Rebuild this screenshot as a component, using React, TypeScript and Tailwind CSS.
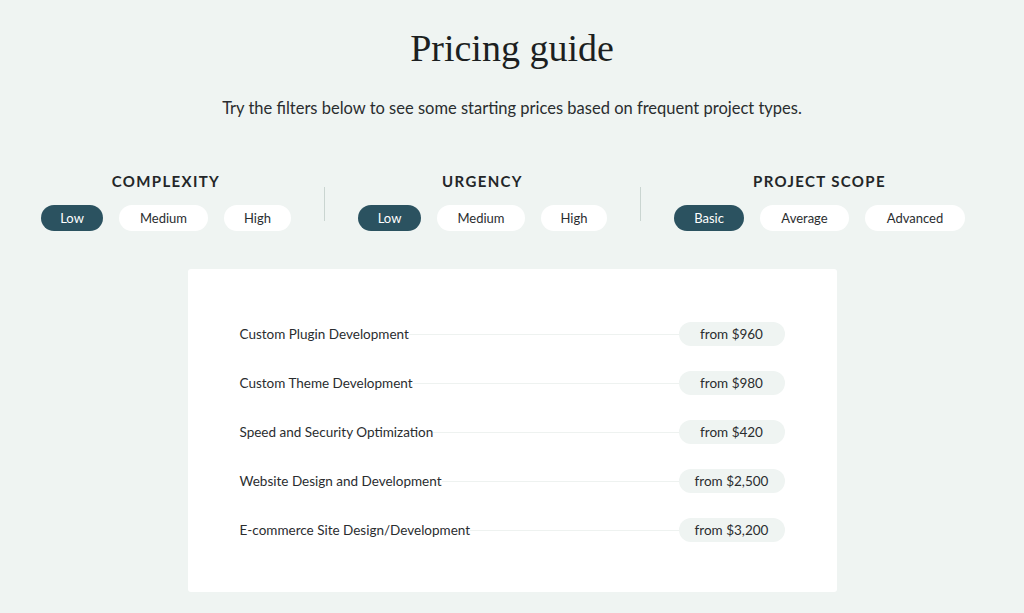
import React from 'react';

interface FilterGroup {
  title: string;
  options: { label: string; width: string }[];
}

const GROUPS: FilterGroup[] = [
  {
    title: 'COMPLEXITY',
    options: [
      { label: 'Low', width: 'w-[62px]' },
      { label: 'Medium', width: 'w-[89px]' },
      { label: 'High', width: 'w-[67px]' },
    ],
  },
  {
    title: 'URGENCY',
    options: [
      { label: 'Low', width: 'w-[63px]' },
      { label: 'Medium', width: 'w-[88px]' },
      { label: 'High', width: 'w-[66px]' },
    ],
  },
  {
    title: 'PROJECT SCOPE',
    options: [
      { label: 'Basic', width: 'w-[70px]' },
      { label: 'Average', width: 'w-[89px]' },
      { label: 'Advanced', width: 'w-[100px]' },
    ],
  },
];

const PRICES = [
  { name: 'Custom Plugin Development', price: 'from $960' },
  { name: 'Custom Theme Development', price: 'from $980' },
  { name: 'Speed and Security Optimization', price: 'from $420' },
  { name: 'Website Design and Development', price: 'from $2,500' },
  { name: 'E-commerce Site Design/Development', price: 'from $3,200' },
];

function Filter({ group }: { group: FilterGroup }) {
  const [active, setActive] = React.useState(0);
  return (
    <div className="flex flex-col items-center">
      <h3 className="text-[15px] font-bold tracking-[0.09em] text-[#232628] leading-none mb-[16px]">
        {group.title}
      </h3>
      <div className="flex gap-[16px]">
        {group.options.map((o, i) => (
          <button
            key={o.label}
            onClick={() => setActive(i)}
            className={
              'h-[26px] rounded-full pt-px text-[13px] ' +
              o.width +
              ' ' +
              (i === active ? 'bg-[#2b5260] text-white' : 'bg-white text-[#2a2d2f]')
            }
          >
            {o.label}
          </button>
        ))}
      </div>
    </div>
  );
}

export default function App() {
  return (
    <div className="min-h-[613px] bg-[#eff4f2] pt-[26px] font-['Lato',sans-serif] text-[#232628]">
      <h1 className="text-center font-['Liberation_Serif',serif] text-[38px] leading-[44px] text-[#1c1f21]">
        Pricing guide
      </h1>
      <p className="mt-[28px] text-center text-[16.5px] leading-[20px] text-[#2a2d2f]">
        Try the filters below to see some starting prices based on frequent project types.
      </p>

      <div className="mt-[56px] flex items-start pl-[41px]">
        {GROUPS.map((g, i) => (
          <React.Fragment key={g.title}>
            {i > 0 && <div className="mx-[33px] mt-[13px] h-[34px] w-px bg-[#cad5d1]" />}
            <Filter group={g} />
          </React.Fragment>
        ))}
      </div>

      <div className="mx-auto mt-[38px] w-[649px] rounded-[3px] bg-white px-[52px] pt-[53px] pb-[50px]">
        <div className="flex flex-col gap-[25px]">
          {PRICES.map((p) => (
            <div key={p.name} className="flex items-center">
              <span className="text-[13.5px] text-[#2a2d2f] whitespace-nowrap">{p.name}</span>
              <div className="h-px flex-1 bg-[#eef2f0]" />
              <span className="flex h-[24px] w-[106px] items-center justify-center rounded-full bg-[#eff4f2] text-[13.5px] text-[#2a2d2f]">
                {p.price}
              </span>
            </div>
          ))}
        </div>
      </div>
    </div>
  );
}
